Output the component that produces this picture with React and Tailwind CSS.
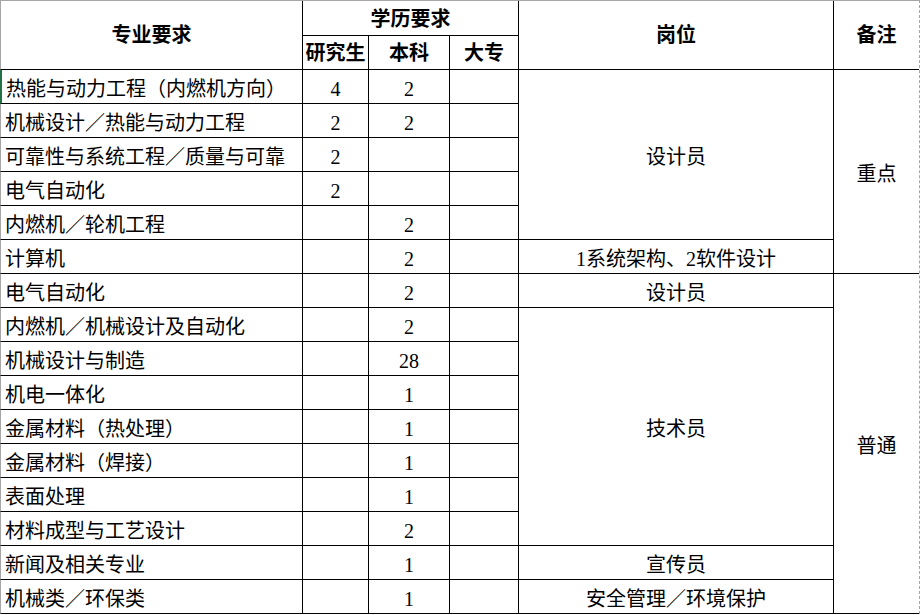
const rows = [
  { major: "热能与动力工程（内燃机方向）", pg: "4", bk: "2", dz: "", post: { text: "设计员", span: "row-span-5" }, note: { text: "重点", span: "row-span-6" }, active: true },
  { major: "机械设计／热能与动力工程", pg: "2", bk: "2", dz: "" },
  { major: "可靠性与系统工程／质量与可靠", pg: "2", bk: "", dz: "" },
  { major: "电气自动化", pg: "2", bk: "", dz: "" },
  { major: "内燃机／轮机工程", pg: "", bk: "2", dz: "" },
  { major: "计算机", pg: "", bk: "2", dz: "", post: { text: "1系统架构、2软件设计", span: "" } },
  { major: "电气自动化", pg: "", bk: "2", dz: "", post: { text: "设计员", span: "" }, note: { text: "普通", span: "row-span-10" } },
  { major: "内燃机／机械设计及自动化", pg: "", bk: "2", dz: "", post: { text: "技术员", span: "row-span-7" } },
  { major: "机械设计与制造", pg: "", bk: "28", dz: "" },
  { major: "机电一体化", pg: "", bk: "1", dz: "" },
  { major: "金属材料（热处理）", pg: "", bk: "1", dz: "" },
  { major: "金属材料（焊接）", pg: "", bk: "1", dz: "" },
  { major: "表面处理", pg: "", bk: "1", dz: "" },
  { major: "材料成型与工艺设计", pg: "", bk: "2", dz: "" },
  { major: "新闻及相关专业", pg: "", bk: "1", dz: "", post: { text: "宣传员", span: "" } },
  { major: "机械类／环保类", pg: "", bk: "1", dz: "", post: { text: "安全管理／环境保护", span: "" } },
];

const cell = "flex items-center justify-center border-r border-b border-black";

export default function App() {
  return (
    <div
      className="w-[921px] h-[615px] bg-white text-black text-[20px] leading-none overflow-hidden"
      style={{ fontFamily: '"Liberation Serif", "Noto Sans CJK SC", serif' }}
    >
      <div className="grid w-[920px] grid-cols-[303px_66px_81px_69px_315px_85px] grid-rows-[35px_34px_repeat(16,34px)] border-t border-r border-t-[#a6a6a6] border-r-[#a6a6a6] [border-right-style:dashed]">
        {/* header */}
        <div className={`${cell} row-span-2 border-l border-l-[#a6a6a6] font-bold`}>专业要求</div>
        <div className={`${cell} col-span-3 font-bold pt-0.5`}>学历要求</div>
        <div className={`${cell} row-span-2 font-bold`}>岗位</div>
        <div className="row-span-2 flex items-center justify-center border-b border-black font-bold">备注</div>
        <div className={`${cell} font-bold`}>研究生</div>
        <div className={`${cell} font-bold`}>本科</div>
        <div className={`${cell} font-bold`}>大专</div>

        {rows.map((r, i) => (
          <Row key={i} r={r} />
        ))}
      </div>
    </div>
  );
}

function Row({ r }) {
  return (
    <>
      <div
        className={`flex items-center pl-[4px] pt-1 whitespace-nowrap overflow-hidden border-r border-b border-black ${
          r.active ? "border-l-2 border-l-[#217346]" : "border-l border-l-[#a6a6a6]"
        }`}
      >
        {r.major}
      </div>
      <div className={`${cell} pt-1`}>{r.pg}</div>
      <div className={`${cell} pt-1`}>{r.bk}</div>
      <div className={`${cell} pt-1`}>{r.dz}</div>
      {r.post && <div className={`${cell} pt-1 ${r.post.span}`}>{r.post.text}</div>}
      {r.note && (
        <div className={`flex items-center justify-center border-b border-black pt-1 ${r.note.span}`}>
          {r.note.text}
        </div>
      )}
    </>
  );
}
